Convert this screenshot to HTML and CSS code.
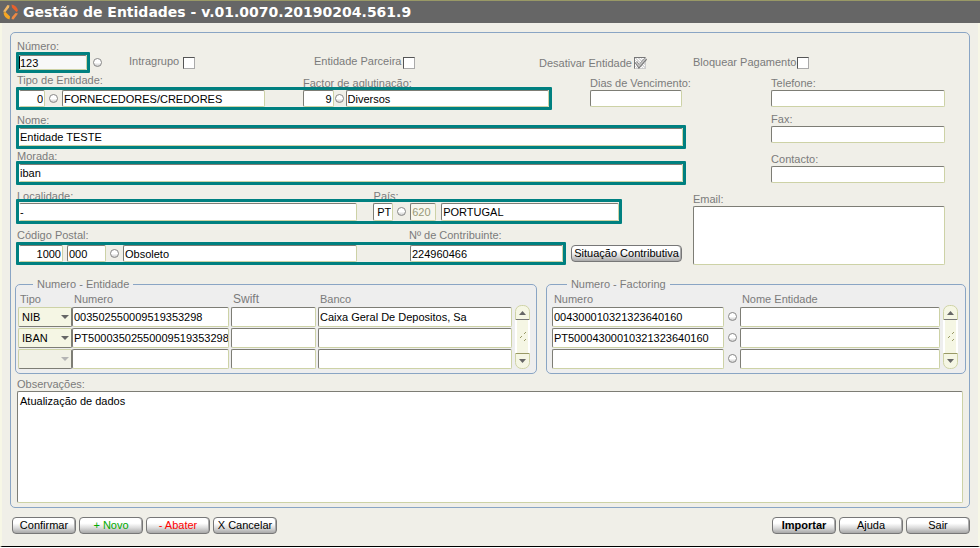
FILE: index.html
```html
<!DOCTYPE html>
<html lang="pt">
<head>
<meta charset="utf-8">
<title>Gestão de Entidades</title>
<link rel="stylesheet" href="styles.css">
</head>
<body>
<header class="titlebar">
  <svg class="logo" viewBox="0 0 16 16" aria-hidden="true">
    <path d="M0 7.500 L4.500 1 L6.500 1.500 L6 3.500 L2.500 8Z" fill="#f0b866"/>
    <path d="M8.500 .5 A8 8 0 0 1 15 6.500 L13.500 8 L9 3.500Z" fill="#e8602c"/>
    <path d="M.5 8.500 L2.500 8 L7 12.500 L6.500 15.500 A8 8 0 0 1 .5 8.500Z" fill="#f5a623"/>
    <path d="M15 9.500 L10.500 15.500 L8.500 15 L9 13 L12.500 9Z" fill="#ee8a45"/>
  </svg>
  <h1>Gestão de Entidades - v.01.0070.20190204.561.9</h1>
</header>
<main class="window">
  <form class="panel">
    <div class="top">
      <div class="main">
        <div class="flags">
          <div class="numero">
            <label for="numero">Número:</label>
            <div class="inline">
              <div class="band band-short"><input id="numero" class="flat grow" value="123"></div>
              <button type="button" class="lov" aria-label="Lista de números"></button>
            </div>
          </div>
          <div class="check"><label for="intra">Intragrupo</label><input type="checkbox" id="intra"></div>
          <div class="check check-near"><label for="parceira">Entidade Parceira</label><input type="checkbox" id="parceira"></div>
          <div class="check check-near check-low"><label for="desativar">Desativar Entidade</label>
            <span class="ticked"><input type="checkbox" id="desativar" checked>
              <svg viewBox="0 0 13 12" aria-hidden="true"><path d="M2 5 L5 9.500 L12 1.500" fill="none" stroke="#777" stroke-width="3"/><path d="M2 5 L5 9 L12 1" fill="none" stroke="#c4c4c4" stroke-width="1.500"/></svg>
            </span>
          </div>
        </div>

        <div class="tipo-row">
          <div class="tipo">
            <div class="labels"><label for="tipo">Tipo de Entidade:</label><label class="low" for="factor">Factor de aglutinação:</label></div>
            <div class="band halves">
              <div class="half">
                <input id="tipo" class="flat num w26" value="0">
                <button type="button" class="lov" aria-label="Lista de tipos"></button>
                <input class="grow" aria-label="Descrição do tipo" value="FORNECEDORES/CREDORES">
              </div>
              <div class="half">
                <input id="factor" class="num w31" value="9">
                <button type="button" class="lov tight" aria-label="Lista de factores"></button>
                <input class="grow" aria-label="Descrição do factor" value="Diversos">
              </div>
            </div>
          </div>
          <div class="field dias"><label for="dias">Dias de Vencimento:</label><input id="dias"></div>
        </div>

        <div class="line">
          <label for="nome">Nome:</label>
          <div class="band"><input id="nome" class="flat grow" value="Entidade TESTE"></div>
        </div>
        <div class="line">
          <label for="morada">Morada:</label>
          <div class="band"><input id="morada" class="flat grow" value="iban"></div>
        </div>
        <div class="line local">
          <div class="labels"><label for="localidade">Localidade:</label><label for="pais">País:</label></div>
          <div class="band cols">
            <input id="localidade" class="flat" value="-">
            <div class="half">
              <input id="pais" class="num w20" value="PT">
              <button type="button" class="lov" aria-label="Lista de países"></button>
              <input class="w26 dim" aria-label="Código numérico do país" value="620">
              <input class="grow country" aria-label="Nome do país" value="PORTUGAL">
            </div>
          </div>
        </div>
        <div class="line postal">
          <div class="codes">
            <div class="labels"><label for="postal">Código Postal:</label><label for="nif">Nº de Contribuinte:</label></div>
            <div class="band cols">
              <div class="half">
                <input id="postal" class="flat num w44" value="1000">
                <input class="w39 suffix" aria-label="Extensão do código postal" value="000">
                <button type="button" class="lov" aria-label="Lista de códigos postais"></button>
                <input class="grow" aria-label="Localidade postal" value="Obsoleto">
              </div>
              <input id="nif" value="224960466">
            </div>
          </div>
          <button type="button" class="btn">Situação Contributiva</button>
        </div>
      </div>

      <div class="side">
        <div class="check"><label for="bloquear">Bloquear Pagamento</label><input type="checkbox" id="bloquear"></div>
        <div class="field narrow"><label for="telefone">Telefone:</label><input id="telefone"></div>
        <div class="field narrow fax"><label for="fax">Fax:</label><input id="fax"></div>
        <div class="field narrow spaced"><label for="contacto">Contacto:</label><input id="contacto"></div>
        <div class="field email spaced"><label for="email">Email:</label><textarea id="email"></textarea></div>
      </div>
    </div>

    <div class="groups">
      <fieldset class="entidade">
        <legend>Numero - Entidade</legend>
        <div class="grid">
          <table>
            <thead><tr><th class="c-tipo">Tipo</th><th class="c-num">Numero</th><th class="c-swift">Swift</th><th>Banco</th></tr></thead>
            <tbody>
              <tr><td><span class="pick"><select aria-label="Tipo 1"><option>NIB</option><option>IBAN</option></select></span></td><td><input aria-label="Numero 1" value="003502550009519353298"></td><td><input aria-label="Swift 1"></td><td><input aria-label="Banco 1" value="Caixa Geral De Depositos, Sa"></td></tr>
              <tr><td><span class="pick"><select aria-label="Tipo 2"><option>IBAN</option><option>NIB</option></select></span></td><td><input aria-label="Numero 2" value="PT50003502550009519353298"></td><td><input aria-label="Swift 2"></td><td><input aria-label="Banco 2"></td></tr>
              <tr><td><span class="pick off"><select aria-label="Tipo 3" disabled><option></option></select></span></td><td><input aria-label="Numero 3"></td><td><input aria-label="Swift 3"></td><td><input aria-label="Banco 3"></td></tr>
            </tbody>
          </table>
          <svg class="scroll" viewBox="0 0 15 64" aria-hidden="true">
            <rect x=".5" y=".5" width="14" height="63" rx="6" fill="#f5f6e4" stroke="#cfd3a6"/>
            <path d="M1 15V48M14 15V48" stroke="#fff" stroke-width="2"/>
            <path d="M7.500 6L11 10H4Z M7.500 58L11 54H4Z" fill="#666"/>
            <path d="M1 14.500H14" stroke="#777"/><path d="M1 48.500H14" stroke="#999966"/>
            <path d="M5 33L7 31M9 29L11 27M9 36L11 34" stroke="#999966"/>
          </svg>
        </div>
      </fieldset>
      <fieldset class="factoring">
        <legend>Numero - Factoring</legend>
        <div class="grid">
          <table>
            <thead><tr><th class="c-fact">Numero</th><th class="c-lov"></th><th>Nome Entidade</th></tr></thead>
            <tbody>
              <tr><td><input aria-label="Numero factoring 1" value="004300010321323640160"></td><td><button type="button" class="lov" aria-label="Lista 1"></button></td><td><input aria-label="Nome entidade 1"></td></tr>
              <tr><td><input aria-label="Numero factoring 2" value="PT50004300010321323640160"></td><td><button type="button" class="lov" aria-label="Lista 2"></button></td><td><input aria-label="Nome entidade 2"></td></tr>
              <tr><td><input aria-label="Numero factoring 3"></td><td><button type="button" class="lov" aria-label="Lista 3"></button></td><td><input aria-label="Nome entidade 3"></td></tr>
            </tbody>
          </table>
          <svg class="scroll" viewBox="0 0 15 64" aria-hidden="true">
            <rect x=".5" y=".5" width="14" height="63" rx="6" fill="#f5f6e4" stroke="#cfd3a6"/>
            <path d="M1 15V48M14 15V48" stroke="#fff" stroke-width="2"/>
            <path d="M7.500 6L11 10H4Z M7.500 58L11 54H4Z" fill="#666"/>
            <path d="M1 14.500H14" stroke="#777"/><path d="M1 48.500H14" stroke="#999966"/>
            <path d="M5 33L7 31M9 29L11 27M9 36L11 34" stroke="#999966"/>
          </svg>
        </div>
      </fieldset>
    </div>

    <div class="field notes">
      <label for="obs">Observações:</label>
      <textarea id="obs">Atualização de dados</textarea>
    </div>
  </form>

  <footer class="actions">
    <button type="button" class="btn">Confirmar</button>
    <button type="button" class="btn new">+ Novo</button>
    <button type="button" class="btn remove">- Abater</button>
    <button type="button" class="btn">X Cancelar</button>
    <span class="spacer"></span>
    <button type="button" class="btn strong">Importar</button>
    <button type="button" class="btn">Ajuda</button>
    <button type="button" class="btn">Sair</button>
  </footer>
</main>
</body>
</html>
```
FILE: styles.css
```css
* { box-sizing: border-box; }

body {
  margin: 0;
  min-height: 100vh;
  display: flex;
  flex-direction: column;
  background: #f0efe8;
  border-bottom: 1px solid #fff;
  font: 11px/12px "Liberation Sans", Arial, sans-serif;
  color: #000;
}

.titlebar {
  display: flex;
  align-items: center;
  gap: 4px;
  height: 23px;
  padding: 0 3px;
  border-top: 1px solid #999966;
  background: #666;
}
.titlebar h1 {
  margin: 0;
  font: bold 14px/22px "DejaVu Sans", Verdana, sans-serif;
  color: #fff;
}
.logo { width: 16px; height: 16px; }

.window {
  flex: 1;
  display: flex;
  flex-direction: column;
  padding: 9px 8px 12px;
  border: 2px solid #f7f7e6;
  border-top: 0;
  border-bottom: 1px solid #000;
}

.panel {
  flex: 1;
  display: flex;
  flex-direction: column;
  padding: 7px 3px 4px 5px;
  border: 1px solid #8aa5c4;
  border-radius: 5px;
}

label, legend, th { color: #7b7b7b; font-weight: normal; }
label { display: block; white-space: nowrap; }

input, textarea, select, button { font: inherit; color: #000; margin: 0; }

input, textarea {
  min-width: 0;
  padding: 0 0 0 1px;
  border: 1px solid;
  border-color: #7d7d75 #cdd2a6 #cdd2a6 #7d7d75;
  border-radius: 2px;
  background: #fff;
}
input { height: 17px; }
textarea { display: block; width: 100%; padding: 3px 2px; resize: none; }

input[type="checkbox"] {
  appearance: none;
  width: 12px;
  height: 12px;
  padding: 0;
  border-color: #555 #aaa #aaa #555;
  border-radius: 0;
}

.top {
  display: grid;
  grid-template-columns: 670fr 252fr;
  column-gap: 7px;
  padding-right: 21px;
}
.main label { padding-left: 1px; }

.band {
  position: relative;
  display: flex;
  align-items: center;
  height: 24px;
  border: 3px solid #008080;
  border-radius: 1px;
}
.band input { height: 18px; }
.band .flat { border-left-color: #fff; padding-left: 0; }
.band-short { width: 74px; height: 21px; }
.band-short .flat { height: 15px; border-left-color: #000; background: #f8f8f8; }
.grow { flex: 1; }
.band .num { text-align: right; padding-right: 1px; }
.dim { color: #999977; background: #f7f7ee; }
.w20 { width: 20px; }
.w26 { width: 26px; }
.w31 { width: 31px; }
.w39 { width: 39px; }
.w44 { width: 44px; }

.lov {
  flex: none;
  width: 9px;
  height: 9px;
  margin: 0 4px;
  padding: 0;
  border: 1px solid #888;
  border-radius: 50%;
  background: linear-gradient(#fff 50%, #ccc);
}
.lov.tight { margin: 0 2px 0 1px; }

.flags { display: grid; grid-template-columns: 113fr 185fr 225fr 147fr; }
.inline { display: flex; align-items: center; }
.inline .lov { margin: 0 3px; }
.check { display: flex; gap: 4px; padding-top: 15px; }
.main .check label { padding-left: 0; }
.check input { margin-top: 2px; }
.check-near { gap: 2px; }
.main .check-low label { padding-top: 2px; }
.ticked { position: relative; width: 13px; height: 14px; }
.ticked input {
  border-color: #777 #ccc #ccc #777;
  background: repeating-linear-gradient(45deg, #fff 0 1px, #d8d8d8 1px 2px);
}
.ticked svg { position: absolute; left: 0; top: 2px; width: 13px; height: 12px; pointer-events: none; }

.tipo-row { display: flex; gap: 38px; padding: 1px 4px 0 0; }
.tipo { flex: 536; }
.tipo .band { margin-top: -2px; height: 23px; }
.tipo .band input { height: 17px; }
.tipo .labels { display: grid; grid-template-columns: 286fr 250fr; }
.main .low { padding-top: 3px; }
.halves { display: grid; grid-template-columns: 246fr 247fr; gap: 38px; }
.half { display: flex; align-items: center; min-width: 0; }
.dias { flex: 92; padding-top: 3px; min-width: 0; }
.main .dias label { padding-left: 0; }

.field input { width: 100%; display: block; margin-top: 1px; }

.line { margin-top: 4px; }
.line .band { margin-top: -1px; }
.line + .line { margin-top: 1px; }
.main .line + .local { width: 90.5%; margin-top: 5px; }
.local .labels { display: grid; grid-template-columns: 357fr 250fr; }
.local .cols { display: grid; grid-template-columns: 338fr 246fr; column-gap: 16px; margin-top: -3px; height: 25px; }
.country { margin-left: 5px; }
.main .line + .postal { display: flex; gap: 5px; align-items: flex-end; margin-top: 5px; padding-right: 4px; }
.codes { flex: 1; }
.codes .labels { display: grid; grid-template-columns: 392fr 158fr; }
.codes .cols { display: grid; grid-template-columns: 338fr 153fr; column-gap: 53px; margin-top: 1px; height: 23px; }
.codes .band input { height: 17px; }
.suffix { margin-left: 4px; }
.postal .btn { width: 111px; margin-bottom: 3px; }

.side { display: flex; flex-direction: column; }
.side .check { gap: 1px; padding-top: 16px; height: 37px; }
.side .check input { margin-top: 1px; }
.narrow { margin-left: 31%; }
.fax { margin-top: 6px; }
.spaced { margin-top: 10px; }
.email { flex: 1; display: flex; flex-direction: column; }
.email textarea { flex: 1; margin-top: 1px; }

.groups {
  display: grid;
  grid-template-columns: 522fr 420fr;
  column-gap: 10px;
  margin-top: 13px;
}
fieldset {
  min-width: 0;
  margin: 0 0 0 -1px;
  padding: 2px 6px 4px 2px;
  border: 1px solid #8aa5c4;
  border-radius: 5px;
  background: #eee;
}
fieldset.factoring { padding: 2px 7px 4px 5px; }
legend { margin-left: 15px; padding: 0 4px; }
.grid { display: flex; align-items: flex-end; gap: 1px; }
table { flex: 1; table-layout: fixed; width: 100%; border-collapse: collapse; }
th { height: 14px; padding: 0 2px; text-align: left; white-space: nowrap; line-height: 12px; vertical-align: middle; }
td { height: 21px; padding: 0 2px 0 0; }
td input, td select { display: block; width: 100%; height: 20px; }
.c-tipo { width: 54px; }
.c-num { width: 159px; }
.c-swift { width: 87px; font-size: 12px; }
.c-fact { width: 174px; }
.c-lov { width: 14px; }
td .lov { display: block; margin: 0 2px; }
.scroll { flex: none; width: 15px; height: 64px; }

.pick { position: relative; display: block; margin-right: -2px; }
.pick select {
  appearance: none;
  padding: 0 3px;
  border: 1px solid;
  border-color: #cdd2a6 #7d7d75 #7d7d75 #cdd2a6;
  border-radius: 2px;
  background: #f5f6e4;
  opacity: 1;
}
.pick::after {
  content: "";
  position: absolute;
  right: 3px;
  top: 8px;
  border: 4px solid transparent;
  border-top-color: #666;
  border-bottom: 0;
  pointer-events: none;
}
.pick.off::after { border-top-color: #b4b4b4; }
.pick.off select { background: #f1f1e6; }

.notes { flex: 1; display: flex; flex-direction: column; margin-top: 4px; padding: 0 3px 0 1px; }
.notes textarea { flex: 1; margin-top: 1px; min-height: 60px; }

.actions { display: flex; gap: 3px; margin-top: 9px; padding: 0 0 0 2px; }
.spacer { flex: 1; }
.btn {
  flex: none;
  width: 64px;
  height: 17px;
  padding: 0;
  border: 1px solid #777;
  border-radius: 4px;
  background: linear-gradient(#fff 35%, #dcdcdc 65%, #a8a8a8);
  box-shadow: inset -1px 0 #aaa;
  line-height: 15px;
  white-space: nowrap;
}
.new { color: #00aa00; }
.remove { color: #ff0000; }
.strong { font-weight: bold; }
```
